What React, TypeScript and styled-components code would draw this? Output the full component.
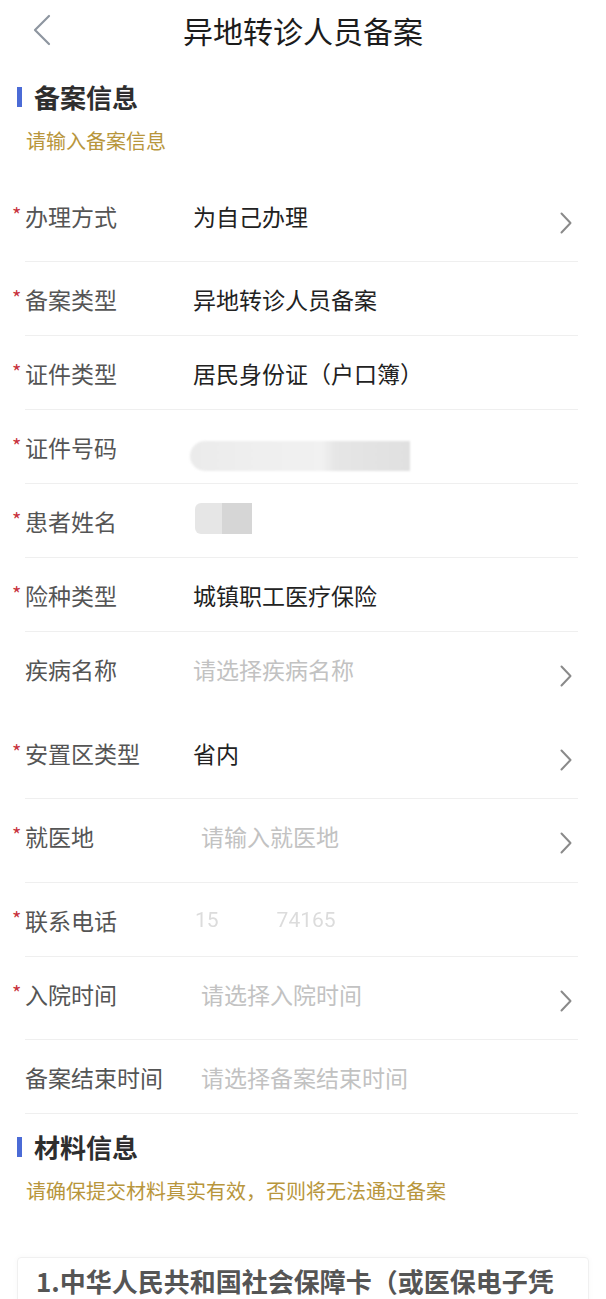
import React from "react";
import styled, { createGlobalStyle } from "styled-components";

const Global = createGlobalStyle`
  html, body { margin: 0; padding: 0; background: #ffffff; }
  body {
    font-family: "Noto Sans CJK SC", "Noto Sans", sans-serif;
    -webkit-font-smoothing: antialiased;
  }
  * { box-sizing: border-box; }
`;

const Page = styled.div`
  width: 606px;
  background: #fff;
  overflow: hidden;
`;

const Header = styled.header`
  display: grid;
  grid-template-columns: 1fr auto 1fr;
  align-items: center;
  height: 60px;
`;

const BackButton = styled.div`
  padding-left: 33px;
  display: flex;
  align-items: center;
  height: 60px;
`;

const Title = styled.h1`
  margin: 0;
  font-size: 30px;
  font-weight: 400;
  line-height: 60px;
  color: #1c1c1c;
`;

const SectionHead = styled.div<{ $mt: number }>`
  display: flex;
  align-items: center;
  gap: 12px;
  margin-top: ${(p) => p.$mt}px;
  padding-left: 17px;
  height: 36px;
`;

const Bar = styled.span`
  width: 5px;
  height: 20px;
  background: #4b6bd6;
  flex: none;
`;

const SectionTitle = styled.h2`
  margin: 0;
  font-size: 26px;
  font-weight: 700;
  line-height: 36px;
  color: #2e2e2e;
`;

const Hint = styled.p<{ $mb: number }>`
  margin: 13px 0 ${(p) => p.$mb}px 0;
  padding-left: 26px;
  font-size: 20px;
  line-height: 26px;
  color: #b8963c;
`;

const List = styled.div`
  margin: 0 28px 0 25px;
`;

const Row = styled.div<{ $tall?: boolean; $noLine?: boolean }>`
  display: flex;
  align-items: flex-start;
  height: ${(p) => (p.$tall ? 83.4 : 74)}px;
  padding-top: 22px;
  border-bottom: 1px solid ${(p) => (p.$noLine ? "transparent" : "#efefef")};
`;

const Label = styled.div`
  position: relative;
  flex: none;
  width: 168px;
  font-size: 23px;
  line-height: 30px;
  color: #555555;
  white-space: nowrap;
`;

const Star = styled.span`
  position: absolute;
  left: -13px;
  top: 2px;
  font-size: 20px;
  line-height: 24px;
  color: #c8323c;
`;

const Value = styled.div<{ $placeholder?: boolean; $indent?: number }>`
  flex: 1;
  padding-left: ${(p) => p.$indent ?? 0}px;
  font-size: 23px;
  line-height: 30px;
  color: ${(p) => (p.$placeholder ? "#c2c2c2" : "#222222")};
  white-space: nowrap;
`;

const Arrow = styled.svg`
  flex: none;
  margin-top: 11px;
  margin-right: 6px;
`;

const IdBlur = styled.div`
  margin-top: 9px;
  margin-left: -3px;
  width: 220px;
  height: 30px;
  border-radius: 15px 0 0 15px;
  background: linear-gradient(
    90deg,
    #ebebeb 0%,
    #efefef 30%,
    #f1f1f1 60%,
    #e6e6e6 66%,
    #e0e0e0 100%
  );
  filter: blur(0.8px);
`;

const NameBlur = styled.div`
  margin-top: -3px;
  margin-left: 2px;
  width: 57px;
  height: 31px;
  border-radius: 6px 0 0 6px;
  background: linear-gradient(90deg, #e6e6e6 0%, #e6e6e6 47%, #d6d6d6 47%, #d6d6d6 100%);
  filter: blur(0.6px);
`;

const Phone = styled.div`
  display: flex;
  gap: 58px;
  padding-left: 2px;
  font-family: "Roboto", "Noto Sans", sans-serif;
  font-size: 21px;
  line-height: 30px;
  color: #dcdcdc;
  filter: blur(0.5px);
`;

const Card = styled.div`
  margin: 53px 17px 0 17px;
  padding: 5px 18px 10px 18px;
  border: 1px solid #f0f0f0;
  border-radius: 4px;
  box-shadow: 0 0 6px rgba(0, 0, 0, 0.03);
`;

const CardTitle = styled.h3`
  margin: 0;
  font-size: 26px;
  font-weight: 700;
  line-height: 36px;
  color: #555555;
`;

type Field = {
  label: string;
  required?: boolean;
  arrow?: boolean;
  noLine?: boolean;
  value?: string;
  placeholder?: string;
  indent?: number;
  kind?: "id" | "name" | "phone";
};

const fields: Field[] = [
  { label: "办理方式", required: true, arrow: true, value: "为自己办理" },
  { label: "备案类型", required: true, value: "异地转诊人员备案" },
  { label: "证件类型", required: true, value: "居民身份证（户口簿）" },
  { label: "证件号码", required: true, kind: "id" },
  { label: "患者姓名", required: true, kind: "name" },
  { label: "险种类型", required: true, value: "城镇职工医疗保险" },
  { label: "疾病名称", arrow: true, noLine: true, placeholder: "请选择疾病名称" },
  { label: "安置区类型", required: true, arrow: true, value: "省内" },
  { label: "就医地", required: true, arrow: true, placeholder: "请输入就医地", indent: 8 },
  { label: "联系电话", required: true, kind: "phone" },
  { label: "入院时间", required: true, arrow: true, placeholder: "请选择入院时间", indent: 8 },
  { label: "备案结束时间", placeholder: "请选择备案结束时间", indent: 8 },
];

const Chevron = () => (
  <Arrow width="12" height="22" viewBox="0 0 12 22">
    <polyline points="1.5,1.5 10.5,11 1.5,20.5" fill="none" stroke="#8a8a8a" strokeWidth="2" strokeLinecap="round" strokeLinejoin="round" />
  </Arrow>
);

const renderValue = (f: Field) => {
  if (f.kind === "id") return <Value><IdBlur /></Value>;
  if (f.kind === "name") return <Value><NameBlur /></Value>;
  if (f.kind === "phone")
    return (
      <Value>
        <Phone>
          <span>15</span>
          <span>74165</span>
        </Phone>
      </Value>
    );
  if (f.placeholder)
    return (
      <Value $placeholder $indent={f.indent}>
        {f.placeholder}
      </Value>
    );
  return <Value $indent={f.indent}>{f.value}</Value>;
};

export default function App() {
  return (
    <Page>
      <Global />
      <Header>
        <BackButton>
          <svg width="18" height="32" viewBox="0 0 18 32">
            <polyline points="16,2 2,16 16,30" fill="none" stroke="#8e96a0" strokeWidth="2.2" strokeLinecap="round" strokeLinejoin="round" />
          </svg>
        </BackButton>
        <Title>异地转诊人员备案</Title>
        <div />
      </Header>

      <SectionHead $mt={19}>
        <Bar />
        <SectionTitle>备案信息</SectionTitle>
      </SectionHead>
      <Hint $mb={25}>请输入备案信息</Hint>

      <List>
        {fields.map((f) => (
          <Row key={f.label} $tall={f.arrow} $noLine={f.noLine}>
            <Label>
              {f.required && <Star>*</Star>}
              {f.label}
            </Label>
            {renderValue(f)}
            {f.arrow && <Chevron />}
          </Row>
        ))}
      </List>

      <SectionHead $mt={15}>
        <Bar />
        <SectionTitle>材料信息</SectionTitle>
      </SectionHead>
      <Hint $mb={0}>请确保提交材料真实有效，否则将无法通过备案</Hint>

      <Card>
        <CardTitle>1.中华人民共和国社会保障卡（或医保电子凭证）</CardTitle>
      </Card>
    </Page>
  );
}
